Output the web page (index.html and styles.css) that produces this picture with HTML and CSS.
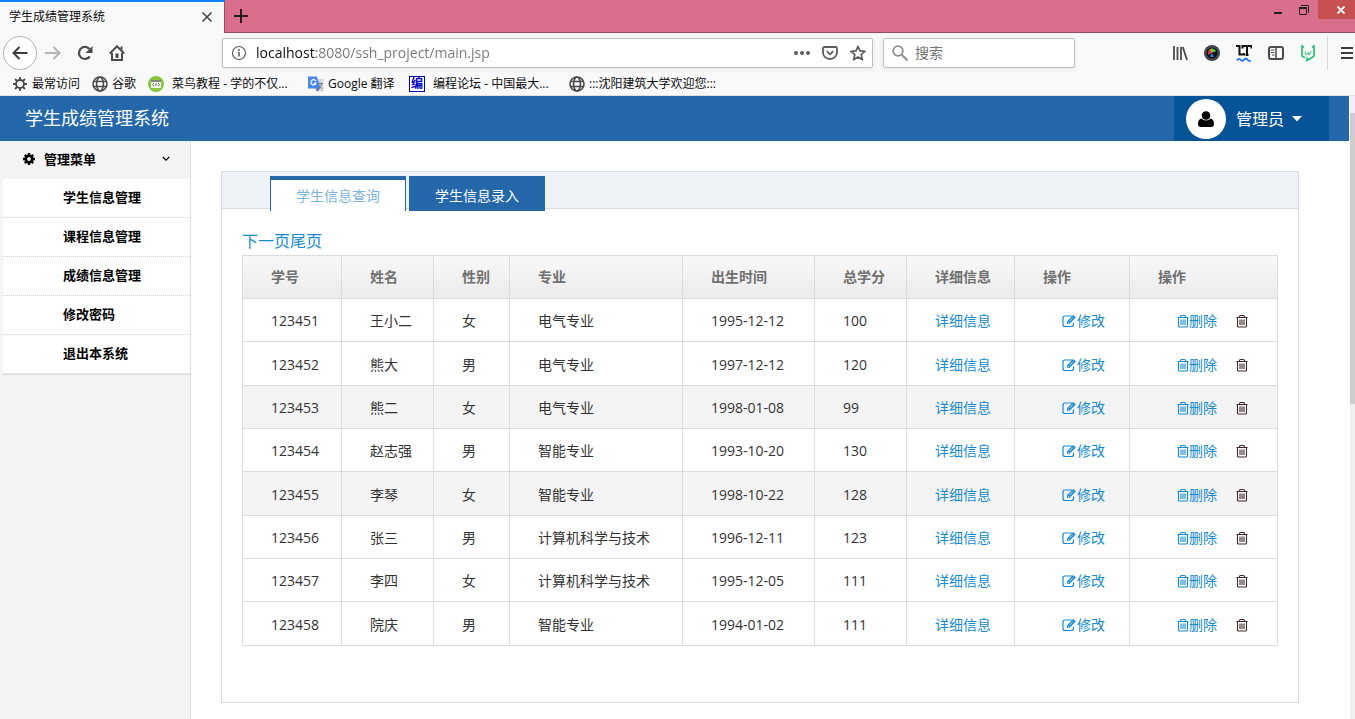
FILE: index.html
```html
<!DOCTYPE html>
<html lang="zh-CN">
<head>
	<meta charset="UTF-8">
	<title>学生成绩管理系统</title>
	<link rel="stylesheet" href="styles.css">
</head>
<body>
	<svg class="defs">
		<symbol id="globe" viewBox="0 0 16 16"><g fill="none" stroke="#4a4a4c" stroke-width="1.6"><circle cx="8" cy="8" r="7"/><ellipse cx="8" cy="8" rx="3.4" ry="7"/><path d="M1.500 5.500h13M1.500 10.500h13"/></g></symbol>
		<symbol id="trash" viewBox="0 0 12 14"><path d="M.5 3.500h11M3.500 3.500V2.500q0-1 1-1h3q1 0 1 1v1M1.500 3.500v8.500q0 1 1 1h7q1 0 1-1v-8.500M4 5.500v5.500M6 5.500v5.500M8 5.500v5.500" fill="none" stroke="currentColor" stroke-width="1.100"/></symbol>
		<symbol id="edit" viewBox="0 0 15 14"><path d="M10 2H3Q1 2 1 4v6.500q0 2 2 2h6.500q2 0 2-2V8.500" fill="none" stroke="currentColor" stroke-width="1.200"/><path d="M5 9.800V7.200L11.200 1l2.600 2.600-6.200 6.200z" fill="currentColor"/><path d="M6 7.800l1.200 1.200M7.500 7l3.500-3.500" stroke="#fff" stroke-width=".8"/></symbol>
	</svg>

	<!-- browser -->
	<div class="tabs">
		<div class="tab"><span>学生成绩管理系统</span><button aria-label="关闭标签"><svg width="12" height="12" viewBox="0 0 12 12"><path d="M1.500 1.500l9 9M10.500 1.500l-9 9" stroke="#444" stroke-width="1.600"/></svg></button></div>
		<button class="add" aria-label="新标签"><svg width="14" height="14" viewBox="0 0 14 14"><path d="M7 0v14M0 7h14" stroke="#2b1a20" stroke-width="2"/></svg></button>
		<div class="win">
			<button aria-label="最小化"><svg width="10" height="12" viewBox="0 0 10 12"><path d="M1 9h8" stroke="#222" stroke-width="2"/></svg></button>
			<button aria-label="还原"><svg width="10" height="10" viewBox="0 0 10 10"><path d="M.5 3h7v6.500h-7zM2 .5h7.500V8" fill="none" stroke="#222"/><path d="M0 3h8" stroke="#222" stroke-width="2"/></svg></button>
			<button class="shut" aria-label="关闭"><svg width="8" height="8" viewBox="0 0 8 8"><path d="M.5.5l7 7M7.500.5l-7 7" stroke="#fff" stroke-width="1.800"/></svg></button>
		</div>
	</div>
	<div class="bar">
		<button class="back" aria-label="后退"><svg width="16" height="16" viewBox="0 0 16 16"><path d="M15.500 8H1.500M7.500 2l-6 6 6 6" fill="none" stroke="#3c3c3f" stroke-width="2"/></svg></button>
		<button aria-label="前进"><svg width="16" height="16" viewBox="0 0 16 16"><path d="M0 8h14M8.500 2l6 6-6 6" fill="none" stroke="#b4b4b4" stroke-width="2"/></svg></button>
		<button aria-label="刷新"><svg width="16" height="16" viewBox="0 0 16 16"><path d="M12.800 11.500A6 6 0 1 1 12.500 4" fill="none" stroke="#4a4a4c" stroke-width="2.200"/><path d="M15.500 1v7h-7z" fill="#4a4a4c"/></svg></button>
		<button aria-label="主页"><svg width="16" height="16" viewBox="0 0 16 16"><path d="M.8 8.500L8 1.300l7.200 7.200" fill="none" stroke="#4a4a4c" stroke-width="2"/><path d="M3 8v7h10V8" fill="none" stroke="#4a4a4c" stroke-width="2"/><path d="M6.500 8.500h3V13h-3zM11.500 1.500h2v4l-2-2z" fill="#4a4a4c"/></svg></button>
		<i class="space"></i>
		<div class="url">
			<svg width="16" height="16" viewBox="0 0 16 16"><circle cx="8" cy="8" r="6.500" fill="none" stroke="#606062" stroke-width="1.200"/><path d="M8 7v4.500M8 4v2" stroke="#606062" stroke-width="1.600"/></svg>
			<input type="text" aria-label="地址" value="localhost:8080/ssh_project/main.jsp">
			<button aria-label="更多"><svg width="16" height="16" viewBox="0 0 16 16"><g fill="#5c5c5e"><circle cx="2" cy="8" r="2"/><circle cx="8" cy="8" r="2"/><circle cx="14" cy="8" r="2"/></g></svg></button>
			<button aria-label="保存到 Pocket"><svg width="16" height="16" viewBox="0 0 16 16"><g fill="none" stroke="#5c5c5e" stroke-width="1.800"><path d="M2.500 2h11q1.500 0 1.500 1.500V7.500a7 6.500 0 0 1-14 0V3.500Q1 2 2.500 2z"/><path d="M4.800 6.200L8 9.300l3.200-3.100"/></g></svg></button>
			<button aria-label="收藏"><svg width="16" height="16" viewBox="0 0 16 16"><path d="M8 1.300l2 4.600 5 .5-3.800 3.300 1.200 5L8 12l-4.400 2.700 1.200-5L1 6.400l5-.5z" fill="none" stroke="#5c5c5e" stroke-width="1.700" stroke-linejoin="round"/></svg></button>
		</div>
		<div class="search">
			<svg width="16" height="16" viewBox="0 0 16 16"><circle cx="6" cy="6" r="4.800" fill="none" stroke="#8c8c8c" stroke-width="1.800"/><path d="M9.500 9.500l6 6" stroke="#8c8c8c" stroke-width="2"/></svg>
			<input type="text" aria-label="搜索" placeholder="搜索">
		</div>
		<i class="space"></i>
		<button aria-label="书架"><svg width="16" height="16" viewBox="0 0 16 16"><path d="M2 1v14M5.500 2v13M9 2v13M10.800 2l4.200 13" fill="none" stroke="#4a4a4c" stroke-width="1.800"/></svg></button>
		<button aria-label="截图"><svg width="16" height="16" viewBox="0 0 16 16"><circle cx="8" cy="8" r="8" fill="#44474f"/><circle cx="8" cy="8" r="5.500" fill="#101010"/><path d="M8 8L5 5a4 4 0 0 1 3-1.500z" fill="#e0a020"/><path d="M8 8V3.500a4 4 0 0 1 4 3z" fill="#4bc43c"/><path d="M8 8l4-1.500a4 4 0 0 1-1 4z" fill="#101010"/><path d="M8 8l2 3.500a4 4 0 0 1-4 0z" fill="#2380e0"/><path d="M8 8l-3.500 2A4 4 0 0 1 5 5z" fill="#d62d60"/></svg></button>
		<button aria-label="LanguageTool"><svg width="16" height="17" viewBox="0 0 16 17"><path d="M0 1h3.500v8.500H8V8M6.500 3.500V1h9v2.500M11 1v9M9.500 10h3" fill="none" stroke="#111" stroke-width="2"/><path d="M1 15.500q1.800-3 3.600-.8t3.500 0 3.500 0 3 .8" fill="none" stroke="#1a6cf0" stroke-width="1.700"/></svg></button>
		<button aria-label="侧栏"><svg width="16" height="16" viewBox="0 0 16 16"><rect x="1" y="2" width="14" height="12" rx="2" fill="none" stroke="#4a4a4c" stroke-width="2"/><path d="M8 2v12" stroke="#4a4a4c" stroke-width="1.500"/><path d="M3 5h3.500M3 7.500h3.500M4 10h2.500" stroke="#4a4a4c"/></svg></button>
		<button aria-label="词典"><svg width="16" height="17" viewBox="0 0 16 17"><path d="M4 2.500L2 1v9.500q0 1 1 1.300l2 .7M12 2.500L14 1v9.500q0 1-1 1.400L7 15.500v-3" fill="none" stroke="#2bc77c" stroke-width="1.800"/><path d="M5 6.500l1 3.500 2-2.500L9 10l2-4" fill="none" stroke="#2bc77c"/></svg></button>
		<button class="menu" aria-label="菜单"><svg width="14" height="14" viewBox="0 0 14 14"><path d="M1 2h12M1 7h12M1 12h12" stroke="#3c3c3f" stroke-width="2"/></svg></button>
	</div>
	<div class="marks">
		<a href="#"><svg width="16" height="16" viewBox="0 0 16 16"><circle cx="8" cy="8" r="4" fill="none" stroke="#4a4a4c" stroke-width="1.800"/><path d="M8 1v3M8 12v3M1 8h3M12 8h3M3 3l2.200 2.200M10.800 10.800L13 13M13 3l-2.200 2.200M5.200 10.800L3 13" stroke="#4a4a4c" stroke-width="1.800"/></svg><span>最常访问</span></a>
		<a href="#"><svg width="16" height="16"><use href="#globe"/></svg><span>谷歌</span></a>
		<a href="#" class="wide"><svg width="16" height="16" viewBox="0 0 16 16"><circle cx="8" cy="8" r="8" fill="#8cc540"/><rect x="3" y="4" width="10" height="8" rx="1" fill="#f4f6ef"/><path d="M3 5h10" stroke="#57614d" stroke-width="1.500"/><path d="M6 7L4.500 8.500 6 10M10 7l1.500 1.500L10 10M8.500 7l-1 3" fill="none" stroke="#667059"/></svg><span>菜鸟教程 - 学的不仅...</span></a>
		<a href="#" class="fy"><svg width="16" height="16" viewBox="0 0 16 16"><path d="M6 3h9.500v12.500H8z" fill="#d8d8d8"/><path d="M0 .5h9l3.500 12H0z" fill="#4a86ee"/><path d="M7.800 5A2.600 2.600 0 1 0 8 7H5.800" fill="none" stroke="#fff" stroke-width="1.200"/><path d="M9.500 7.500H15M12 6.500v1M14 7.500q-1 4-4 5M10.500 9l4 4" fill="none" stroke="#6d7f92"/><path d="M8 12.500h4l-3 3z" fill="#2f5fc0"/></svg><span>Google 翻译</span></a>
		<a href="#" class="wide"><b class="bian">编</b><span>编程论坛 - 中国最大...</span></a>
		<a href="#"><svg width="16" height="16"><use href="#globe"/></svg><span>:::沈阳建筑大学欢迎您:::</span></a>
	</div>

	<!-- page -->
	<div class="page">
		<div class="app">
			<div class="header">
				<h1>学生成绩管理系统</h1>
				<button class="user">
					<span class="face"><svg width="16" height="16" viewBox="0 0 16 16"><circle cx="8" cy="4.500" r="4.300"/><path d="M3.200 7.500Q8 11.500 12.800 7.500 16 8.500 16 13q0 3-3 3H3q-3 0-3-3 0-4.500 3.200-5.500z"/></svg></span>
					管理员
					<svg width="10" height="6" viewBox="0 0 10 6"><path d="M0 0h10L5 5.500z" fill="#fff"/></svg>
				</button>
			</div>
			<div class="main">
				<div class="side">
					<button class="title"><svg width="12" height="12" viewBox="0 0 12 12"><circle cx="6" cy="6" r="3.200" fill="none" stroke="#000" stroke-width="2.600"/><path d="M6 0v2M6 10v2M0 6h2M10 6h2M1.800 1.800l1.500 1.500M8.700 8.700l1.500 1.500M10.200 1.800L8.700 3.300M3.300 8.700l-1.500 1.500" stroke="#000" stroke-width="2.400"/></svg><span>管理菜单</span><svg width="8" height="6" viewBox="0 0 8 6"><path d="M.8 1L4 4.200 7.200 1" fill="none" stroke="#000" stroke-width="1.300"/></svg></button>
					<ul>
						<li><a href="#">学生信息管理</a></li>
						<li><a href="#">课程信息管理</a></li>
						<li><a href="#">成绩信息管理</a></li>
						<li><a href="#">修改密码</a></li>
						<li><a href="#">退出本系统</a></li>
					</ul>
				</div>
				<div class="content">
					<div class="box">
						<div class="nav">
							<a href="#" class="now">学生信息查询</a>
							<a href="#">学生信息录入</a>
						</div>
						<div class="list">
							<p><a href="#">下一页</a><a href="#">尾页</a></p>
							<table>
								<colgroup><col class="c1"><col class="c2"><col class="c3"><col class="c4"><col class="c5"><col class="c2"><col class="c6"><col class="c7"><col class="c8"></colgroup>
								<thead>
									<tr><th>学号</th><th>姓名</th><th>性别</th><th>专业</th><th>出生时间</th><th>总学分</th><th>详细信息</th><th>操作</th><th>操作</th></tr>
								</thead>
								<tbody>
									<tr>
										<td>123451</td><td>王小二</td><td>女</td><td>电气专业</td><td>1995-12-12</td><td>100</td>
										<td><a href="#">详细信息</a></td>
										<td class="op"><a href="#"><svg width="15" height="14"><use href="#edit"/></svg>修改</a></td>
										<td class="op"><a href="#"><svg width="12" height="14"><use href="#trash"/></svg>删除</a><svg class="del" width="12" height="14"><use href="#trash"/></svg></td>
									</tr>
									<tr>
										<td>123452</td><td>熊大</td><td>男</td><td>电气专业</td><td>1997-12-12</td><td>120</td>
										<td><a href="#">详细信息</a></td>
										<td class="op"><a href="#"><svg width="15" height="14"><use href="#edit"/></svg>修改</a></td>
										<td class="op"><a href="#"><svg width="12" height="14"><use href="#trash"/></svg>删除</a><svg class="del" width="12" height="14"><use href="#trash"/></svg></td>
									</tr>
									<tr class="gray">
										<td>123453</td><td>熊二</td><td>女</td><td>电气专业</td><td>1998-01-08</td><td>99</td>
										<td><a href="#">详细信息</a></td>
										<td class="op"><a href="#"><svg width="15" height="14"><use href="#edit"/></svg>修改</a></td>
										<td class="op"><a href="#"><svg width="12" height="14"><use href="#trash"/></svg>删除</a><svg class="del" width="12" height="14"><use href="#trash"/></svg></td>
									</tr>
									<tr>
										<td>123454</td><td>赵志强</td><td>男</td><td>智能专业</td><td>1993-10-20</td><td>130</td>
										<td><a href="#">详细信息</a></td>
										<td class="op"><a href="#"><svg width="15" height="14"><use href="#edit"/></svg>修改</a></td>
										<td class="op"><a href="#"><svg width="12" height="14"><use href="#trash"/></svg>删除</a><svg class="del" width="12" height="14"><use href="#trash"/></svg></td>
									</tr>
									<tr class="gray">
										<td>123455</td><td>李琴</td><td>女</td><td>智能专业</td><td>1998-10-22</td><td>128</td>
										<td><a href="#">详细信息</a></td>
										<td class="op"><a href="#"><svg width="15" height="14"><use href="#edit"/></svg>修改</a></td>
										<td class="op"><a href="#"><svg width="12" height="14"><use href="#trash"/></svg>删除</a><svg class="del" width="12" height="14"><use href="#trash"/></svg></td>
									</tr>
									<tr>
										<td>123456</td><td>张三</td><td>男</td><td>计算机科学与技术</td><td>1996-12-11</td><td>123</td>
										<td><a href="#">详细信息</a></td>
										<td class="op"><a href="#"><svg width="15" height="14"><use href="#edit"/></svg>修改</a></td>
										<td class="op"><a href="#"><svg width="12" height="14"><use href="#trash"/></svg>删除</a><svg class="del" width="12" height="14"><use href="#trash"/></svg></td>
									</tr>
									<tr>
										<td>123457</td><td>李四</td><td>女</td><td>计算机科学与技术</td><td>1995-12-05</td><td>111</td>
										<td><a href="#">详细信息</a></td>
										<td class="op"><a href="#"><svg width="15" height="14"><use href="#edit"/></svg>修改</a></td>
										<td class="op"><a href="#"><svg width="12" height="14"><use href="#trash"/></svg>删除</a><svg class="del" width="12" height="14"><use href="#trash"/></svg></td>
									</tr>
									<tr>
										<td>123458</td><td>院庆</td><td>男</td><td>智能专业</td><td>1994-01-02</td><td>111</td>
										<td><a href="#">详细信息</a></td>
										<td class="op"><a href="#"><svg width="15" height="14"><use href="#edit"/></svg>修改</a></td>
										<td class="op"><a href="#"><svg width="12" height="14"><use href="#trash"/></svg>删除</a><svg class="del" width="12" height="14"><use href="#trash"/></svg></td>
									</tr>
								</tbody>
							</table>
						</div>
					</div>
				</div>
			</div>
		</div>
		<div class="scroll"><i></i></div>
	</div>
</body>
</html>
```
FILE: styles.css
```css
*{margin: 0;padding: 0;box-sizing: border-box;}
body{height: 100vh;display: flex;flex-direction: column;overflow: hidden;font: 14px/20px "Open Sans","Noto Sans CJK SC",sans-serif;color: #333;background: #fff;}
a{text-decoration: none;color: #168bd0;}
ul{list-style: none;}
button{border: 0;background: none;font: inherit;color: inherit;display: flex;align-items: center;justify-content: center;}
input{border: 0;outline: 0;background: none;font: inherit;min-width: 0;}
svg{flex: none;}
.defs{position: absolute;width: 0;height: 0;}

/* browser */
.tabs{display: flex;height: 33px;background: #d96f8d;font-size: 12px;color: #0c0c0d;flex: none;}
.tab{width: 225px;border-top: 2px solid #0a84ff;border-right: 1px solid #9c4a61;background: #f9f9fa;padding: 0 11px 2px 9px;display: flex;align-items: center;justify-content: space-between;}
.add{width: 32px;border-bottom: 1px solid #9c4a61;}
.win{flex: 1;display: flex;justify-content: flex-end;border-bottom: 1px solid #9c4a61;}
.win button{width: 26px;height: 19px;}
.win .shut{width: 37px;background: #c75050;padding-left: 9px;margin-left: 1px;}
.bar{display: flex;align-items: center;height: 40px;padding-left: 3px;background: #f9f9fa;flex: none;}
.bar button{width: 32px;height: 32px;flex: none;}
.bar .back{width: 34px;height: 34px;border: 1px solid #b4b4b4;border-radius: 50%;background: #fff;}
.space{flex: 0 0 89px;}
.url,.search{display: flex;align-items: center;height: 30px;border: 1px solid #c0c0c0;border-radius: 2px;background: #fff;box-shadow: 0 1px 4px #e6e6e6;}
.url{flex: 1;padding-left: 8px;margin-right: 10px;}
.url input{flex: 1;margin-left: 9px;color: transparent;background: linear-gradient(90deg,#0c0c0d 60px,#777 60px);-webkit-background-clip: text;background-clip: text;}
.url button{width: 28px;}
.search{width: 192px;padding-left: 8px;}
.search input{flex: 1;margin-left: 7px;}
.search input::placeholder{color: #737373;}
.bar .menu{width: 28px;height: 34px;margin-left: 3px;padding-left: 10px;border-left: 1px solid #d8d8da;}
.marks{display: flex;align-items: center;height: 23px;padding-left: 12px;gap: 12px;background: #f9f9fa;border-bottom: 1px solid #e0e0e0;font-size: 12px;flex: none;}
.marks a{display: flex;align-items: center;gap: 4px;color: #0c0c0d;white-space: nowrap;}
.marks .wide{width: 148px;gap: 8px;}
.marks .fy{width: 89px;}
.bian{width: 16px;height: 16px;border: 1px solid #0000b0;font-size: 12px;line-height: 14px;text-align: center;color: #0000c0;background: #fff;}

/* page */
.page{display: flex;flex: 1;min-height: 0;}
.app{flex: 1;display: flex;flex-direction: column;}
.header{display: flex;justify-content: space-between;height: 45px;padding: 0 20px 0 25px;background: #2468a9;color: #fff;flex: none;}
.header h1{font-size: 18px;line-height: 44px;font-weight: normal;}
.user{width: 155px;padding-left: 12px;justify-content: flex-start;background: #065397;font-size: 16px;gap: 8px;}
.face{width: 40px;height: 40px;border-radius: 50%;background: #fff;display: flex;align-items: center;justify-content: center;margin-right: 2px;}
.main{display: flex;flex: 1;}
.side{width: 191px;background: #f4f4f4;border-right: 1px solid #dcdcdc;font-size: 13px;font-weight: bold;color: #000;}
.title{width: 100%;height: 38px;padding: 0 20px 2px 23px;}
.title span{flex: 1;text-align: left;margin-left: 9px;}
.side ul{margin-left: 3px;background: #fff;border-bottom: 1px solid #dcdcdc;}
.side li{border-bottom: 1px dotted #d4d4d4;}
.side li a{display: block;line-height: 36px;padding: 0 0 2px 60px;color: #000;}
.content{flex: 1;padding: 30px 50px 0 30px;}
.box{border: 1px solid #dcdcdc;}
.nav{display: flex;align-items: flex-start;gap: 3px;height: 37px;padding: 4px 0 0 48px;background: #eef2f7;border-bottom: 1px solid #dcdcdc;}
.nav a{width: 136px;height: 35px;flex: none;border: 1px solid #2468a9;border-width: 4px 1px 0;background: #2468a9;color: #fff;line-height: 32px;text-align: center;}
.nav .now{background: #fff;color: #7db4dc;}
.list{padding: 20px 20px 56px;}
.list p{font-size: 16px;line-height: 24px;padding-bottom: 2px;}
table{width: 100%;table-layout: fixed;border-collapse: collapse;}
tr{height: 43px;}
tbody tr:nth-child(3n+2){height: 44px;}
th,td{border: 1px solid #dcdcdc;padding-left: 28px;text-align: left;white-space: nowrap;}
td{padding-top: 2px;}
th{color: #707070;}
thead tr{background: linear-gradient(#f8f8f8,#ebebeb);}
.gray{background: #f4f4f4;}
td svg{vertical-align: -2px;}
.op{padding-left: 47px;}
.del{margin-left: 19px;color: #43292b;}
.c1{width: 99px;}
.c2{width: 92px;}
.c3{width: 76px;}
.c4{width: 173px;}
.c5{width: 132px;}
.c6{width: 108px;}
.c7{width: 115px;}
.c8{width: 148px;}
.scroll{width: 6px;padding-top: 17px;background: #f0f0f0;border-left: 1px solid #fff;}
.scroll i{display: block;height: 48%;background: #cdcdcd;}
```
